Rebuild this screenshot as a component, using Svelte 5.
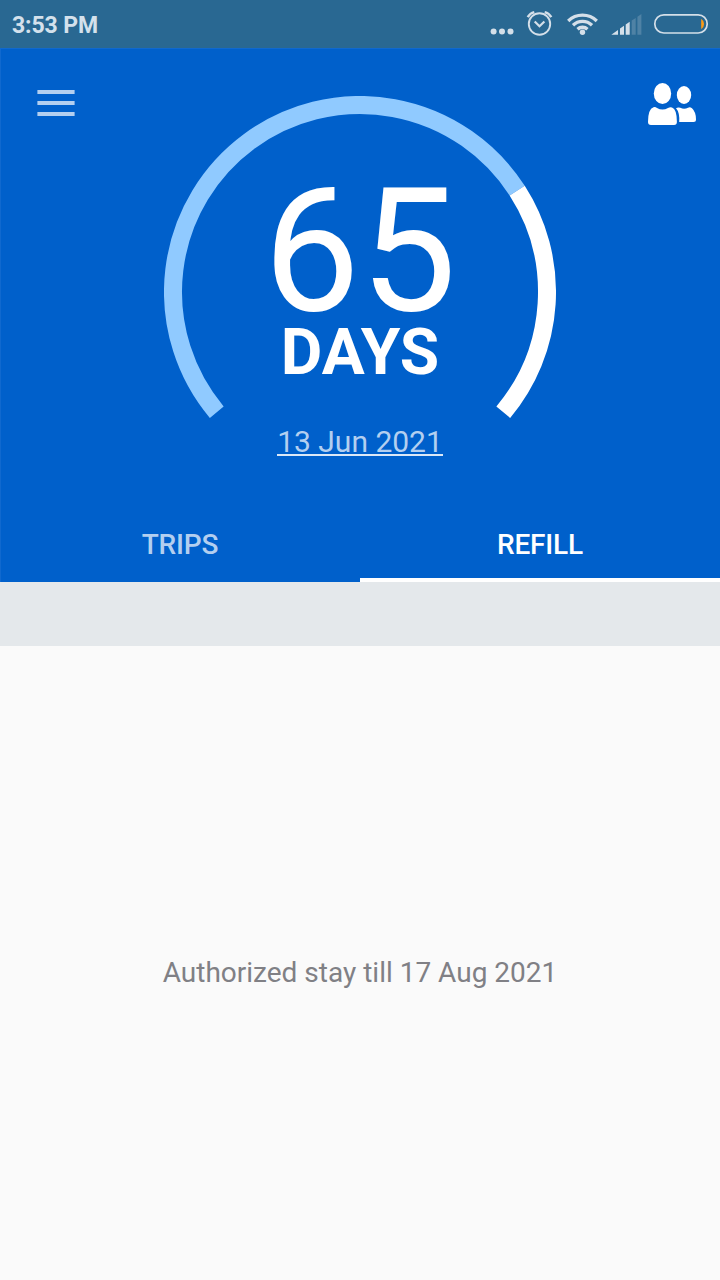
<script lang="ts">
	const tabs = [
		{ id: 'trips', label: 'Trips' },
		{ id: 'refill', label: 'Refill' }
	];

	let active = $state('refill');

	const days = 65;
	const used = 0.72;
	const start = 140;
	const sweep = 260;
	const split = start + sweep * used;

	function point(angle: number) {
		const rad = (angle * Math.PI) / 180;
		return `${196 + 187 * Math.cos(rad)} ${196 + 187 * Math.sin(rad)}`;
	}

	function arc(from: number, to: number) {
		return `M${point(from)}A187 187 0 ${to - from > 180 ? 1 : 0} 1 ${point(to)}`;
	}
</script>

<div class="screen">
	<div class="status">
		<span class="time">3:53 PM</span>
		<svg class="status-icons" width="230" height="48" viewBox="490 0 230 48" fill="none">
			<g fill="#d4dfe9">
				<circle cx="493.6" cy="31.6" r="3" />
				<circle cx="502" cy="31.6" r="3" />
				<circle cx="510.5" cy="31.6" r="3" />
			</g>
			<g stroke="#d4dfe9" stroke-width="1.9">
				<circle cx="539.5" cy="24" r="10.7" />
				<path d="M534.7 21.5l4.8 4.7 4.9-4.7" stroke-width="2.2" />
				<path d="M527.7 17.2q2.2-4 6.6-5.1M544.7 12.1q4.4 1.1 6.6 5.1" stroke-width="2.4" />
			</g>
			<g stroke="#d4dfe9" stroke-width="3.3">
				<path d="M568.2 21a20.5 20.5 0 0 1 28.6 0" />
				<path d="M573 25.3a13.7 13.7 0 0 1 19 0" />
				<path d="M577.5 29.2a7.4 7.4 0 0 1 10 0" />
			</g>
			<circle cx="582.5" cy="32.2" r="2.7" fill="#d4dfe9" />
			<g fill="#d4dfe9">
				<path d="M611.3 34.7l6.7-4.8v4.8zM620 28.5l4-2.7v8.9h-4zM625.7 24.4l4-2.6v12.9h-4z" />
				<path d="M631.7 20.5l4-2.6v16.8h-4zM637.4 16.8l4-2.7v20.6h-4z" opacity=".22" />
			</g>
			<rect x="654.8" y="14.8" width="52.4" height="18.2" rx="9.1" stroke="#d4dfe9" stroke-width="1.7" />
			<path d="M701.2 18.8q2.9 2 2.9 5.2t-2.9 5.2z" fill="#ff9b14" />
		</svg>
	</div>

	<header>
		<div class="toolbar">
			<button class="menu" aria-label="Menu">
				<svg width="38" height="26" viewBox="0 0 38 26" fill="#b3cff0">
					<path d="M.4 0h37.2v4H.4zM.4 11h37.2v4H.4zM.4 22h37.2v4H.4z" />
				</svg>
			</button>

			<div class="gauge">
				<svg class="ring" width="392" height="392" viewBox="0 0 392 392" fill="none" stroke-width="18">
					<path d={arc(start, split)} stroke="#90caff" />
					<path d={arc(split, start + sweep)} stroke="#fff" />
				</svg>
				<div class="reading">
					<span class="count">{days}</span>
					<span class="unit">Days</span>
				</div>
			</div>

			<button class="people" aria-label="Travellers">
				<svg width="48" height="43" viewBox="0 0 48 43" fill="#fff">
					<ellipse cx="14.5" cy="10.5" rx="8.7" ry="10.5" />
					<ellipse cx="36" cy="12" rx="7.2" ry="9" />
					<path
						d="M5.5 24.2Q7.5 23.8 9 25Q14.5 28 20 25Q22 23.8 24 24.5Q28.9 26.2 28.9 39Q28.9 42 26 42H3Q0 42 0 39Q0 26 5.5 24.2Z"
					/>
					<path
						d="M28 25.2Q30 23.8 32.3 24.8Q36.3 26.6 40 24.7Q42 23.6 44 25.3Q48 29 48 36.5Q48 39 45.5 39H31.2Q31.8 29.2 28 25.2Z"
					/>
				</svg>
			</button>
		</div>

		<a class="date" href="#date">13 Jun 2021</a>

		<nav>
			{#each tabs as tab (tab.id)}
				<button class="tab" class:active={tab.id === active} onclick={() => (active = tab.id)}>
					{tab.label}
				</button>
			{/each}
		</nav>
	</header>

	<div class="band"></div>

	<main>
		<p>Authorized stay till 17 Aug 2021</p>
	</main>
</div>

<style>
	:global(body) {
		margin: 0;
	}

	.screen {
		width: 720px;
		height: 1280px;
		display: flex;
		flex-direction: column;
		overflow: hidden;
		background: #fafafa;
		font-family: Roboto, sans-serif;
	}

	button {
		border: 0;
		padding: 0;
		background: none;
		font-family: inherit;
	}

	svg {
		display: block;
	}

	.status {
		height: 48px;
		flex: none;
		display: flex;
		align-items: center;
		justify-content: space-between;
		background: #296892;
	}

	.time {
		padding: 2px 0 0 12px;
		color: #d4e1ec;
		font-size: 23px;
		font-weight: 700;
		letter-spacing: -0.1px;
	}

	header {
		height: 534px;
		flex: none;
		box-sizing: border-box;
		display: flex;
		flex-direction: column;
		background: #0060cb;
		box-shadow: inset 1px 1px #1069cf;
	}

	.toolbar {
		height: 370px;
		padding: 0 24px 0 37px;
		display: flex;
		align-items: flex-start;
		justify-content: space-between;
	}

	.menu {
		width: 38px;
		margin-top: 42px;
	}

	.people {
		margin-top: 35px;
	}

	.gauge {
		width: 392px;
		height: 322px;
		margin: 48px 3px 0 0;
		display: grid;
	}

	.ring,
	.reading {
		grid-area: 1 / 1;
	}

	.reading {
		display: flex;
		flex-direction: column;
		align-items: center;
		padding-top: 81px;
		color: #fff;
	}

	.count {
		font-size: 172px;
		line-height: 148px;
	}

	.unit {
		margin-top: 2px;
		font-size: 64px;
		line-height: 52px;
		font-weight: 700;
		text-transform: uppercase;
	}

	.date {
		align-self: center;
		margin-top: 12px;
		border-bottom: 2px solid #dbe8f7;
		color: #b3cff0;
		font-size: 30px;
		line-height: 24px;
		text-decoration: none;
	}

	nav {
		height: 76px;
		margin-top: auto;
		display: grid;
		grid-template-columns: 1fr 1fr;
	}

	.tab {
		border-top: 4px solid transparent;
		border-bottom: 4px solid transparent;
		color: #b3cff0;
		font-size: 28px;
		font-weight: 500;
		letter-spacing: -0.15px;
		text-transform: uppercase;
	}

	.active {
		border-bottom-color: #fff;
		color: #fff;
	}

	.band {
		height: 64px;
		flex: none;
		background: #e4e8eb;
	}

	main {
		flex: 1;
		display: flex;
		align-items: center;
		justify-content: center;
		padding-top: 18px;
	}

	p {
		margin: 0;
		color: #808085;
		font-size: 28px;
	}
</style>
